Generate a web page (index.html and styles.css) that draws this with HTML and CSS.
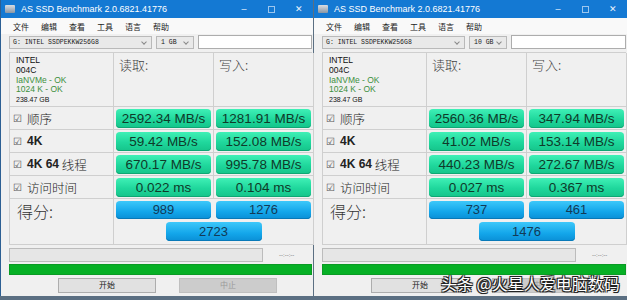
FILE: index.html
```html
<!DOCTYPE html>
<html lang="zh-CN">
<head>
  <meta charset="UTF-8" />
  <title>AS SSD Benchmark</title>
  <link rel="stylesheet" href="styles.css">
</head>
<body>
  <div class="desktop">
    <!-- left window: 1 GB run -->
    <div class="window">
      <div class="titlebar">
        <span class="app-icon"></span>
        <span class="title">AS SSD Benchmark 2.0.6821.41776</span>
        <span class="controls"><span>&#8211;</span><span class="max"></span><span>&#10005;</span></span>
      </div>
      <div class="menubar">
        <span>文件</span><span>编辑</span><span>查看</span><span>工具</span><span>语言</span><span>帮助</span>
      </div>
      <div class="drive-row">
        <div class="select drive">G: INTEL SSDPEKKW256G8<span class="caret"></span></div>
        <div class="select size">1 GB<span class="caret"></span></div>
        <div class="textbox"></div>
      </div>
      <div class="panel">
        <div class="cell info">
          <div>INTEL</div>
          <div>004C</div>
          <div class="ok">IaNVMe - OK</div>
          <div class="ok">1024 K - OK</div>
          <div class="small">238.47 GB</div>
        </div>
        <div class="cell head">读取:</div>
        <div class="cell head">写入:</div>

        <div class="cell label"><span class="check">&#9745;</span>顺序</div>
        <div class="cell"><div class="bar">2592.34 MB/s</div></div>
        <div class="cell"><div class="bar">1281.91 MB/s</div></div>

        <div class="cell label"><span class="check">&#9745;</span><b>4K</b></div>
        <div class="cell"><div class="bar">59.42 MB/s</div></div>
        <div class="cell"><div class="bar">152.08 MB/s</div></div>

        <div class="cell label"><span class="check">&#9745;</span><b>4K 64</b>&nbsp;线程</div>
        <div class="cell"><div class="bar">670.17 MB/s</div></div>
        <div class="cell"><div class="bar">995.78 MB/s</div></div>

        <div class="cell label"><span class="check">&#9745;</span>访问时间</div>
        <div class="cell"><div class="bar">0.022 ms</div></div>
        <div class="cell"><div class="bar">0.104 ms</div></div>

        <div class="cell score-label">得分:</div>
        <div class="cell scores">
          <div class="score">989</div>
          <div class="score">1276</div>
          <div class="score total">2723</div>
        </div>
      </div>
      <div class="progress-row">
        <div class="progress"></div>
        <span class="time">--:--:--</span>
      </div>
      <div class="green-bar"></div>
      <div class="buttons">
        <div class="btn">开始</div>
        <div class="btn disabled">中止</div>
      </div>
    </div>

    <!-- right window: 10 GB run -->
    <div class="window">
      <div class="titlebar">
        <span class="app-icon"></span>
        <span class="title">AS SSD Benchmark 2.0.6821.41776</span>
        <span class="controls"><span>&#8211;</span><span class="max"></span><span>&#10005;</span></span>
      </div>
      <div class="menubar">
        <span>文件</span><span>编辑</span><span>查看</span><span>工具</span><span>语言</span><span>帮助</span>
      </div>
      <div class="drive-row">
        <div class="select drive">G: INTEL SSDPEKKW256G8<span class="caret"></span></div>
        <div class="select size">10 GB<span class="caret"></span></div>
        <div class="textbox"></div>
      </div>
      <div class="panel">
        <div class="cell info">
          <div>INTEL</div>
          <div>004C</div>
          <div class="ok">IaNVMe - OK</div>
          <div class="ok">1024 K - OK</div>
          <div class="small">238.47 GB</div>
        </div>
        <div class="cell head">读取:</div>
        <div class="cell head">写入:</div>

        <div class="cell label"><span class="check">&#9745;</span>顺序</div>
        <div class="cell"><div class="bar">2560.36 MB/s</div></div>
        <div class="cell"><div class="bar">347.94 MB/s</div></div>

        <div class="cell label"><span class="check">&#9745;</span><b>4K</b></div>
        <div class="cell"><div class="bar">41.02 MB/s</div></div>
        <div class="cell"><div class="bar">153.14 MB/s</div></div>

        <div class="cell label"><span class="check">&#9745;</span><b>4K 64</b>&nbsp;线程</div>
        <div class="cell"><div class="bar">440.23 MB/s</div></div>
        <div class="cell"><div class="bar">272.67 MB/s</div></div>

        <div class="cell label"><span class="check">&#9745;</span>访问时间</div>
        <div class="cell"><div class="bar">0.027 ms</div></div>
        <div class="cell"><div class="bar">0.367 ms</div></div>

        <div class="cell score-label">得分:</div>
        <div class="cell scores">
          <div class="score">737</div>
          <div class="score">461</div>
          <div class="score total">1476</div>
        </div>
      </div>
      <div class="progress-row">
        <div class="progress"></div>
        <span class="time">--:--:--</span>
      </div>
      <div class="green-bar"></div>
      <div class="buttons">
        <div class="btn">开始</div>
        <div class="btn disabled">中止</div>
      </div>
    </div>

    <div class="watermark">头条 @火星人爱电脑数码</div>
  </div>
</body>
</html>
```

FILE: styles.css
```css
* {
  box-sizing: border-box;
}

body {
  margin: 0;
  padding: 0;
  width: 627px;
  height: 300px;
  overflow: hidden;
  background: #c9d3dc;
  font-family: "Liberation Sans", "Noto Sans CJK SC", sans-serif;
  color: #111;
}

.desktop {
  position: relative;
  display: flex;
  gap: 1px;
  width: 627px;
  height: 300px;
  background: #5b6f82;
}

.window {
  width: 313px;
  height: 296px;
  background: #f0f0f0;
  display: flex;
  flex-direction: column;
}

.window:first-child {
  border-left: 1px solid #2c5f93;
}

/* title bar */
.titlebar {
  height: 18px;
  background: #1479d3;
  color: #fff;
  display: flex;
  align-items: center;
  padding-left: 4px;
}

.app-icon {
  width: 10px;
  height: 8px;
  background: linear-gradient(#d8dde3, #8a96a3);
  border-radius: 1px;
  margin-right: 6px;
}

.title {
  font-size: 9px;
  flex: 1;
  white-space: nowrap;
}

.controls {
  display: flex;
  align-items: center;
  font-size: 9px;
  color: #e8f2fc;
}

.controls span {
  width: 28px;
  text-align: center;
}

.controls .max {
  width: 7px;
  height: 7px;
  border: 1px solid #9cc6ee;
  margin: 0 10px;
}

/* menu */
.menubar {
  height: 16px;
  background: #f9f9f9;
  display: flex;
  align-items: center;
  padding-left: 12px;
  gap: 12px;
  font-size: 8px;
  color: #222;
}

.drive-row {
  height: 16px;
  display: flex;
  align-items: center;
  padding: 0 0 0 8px;
  gap: 4px;
  background: #f0f0f0;
}

.select {
  position: relative;
  height: 13px;
  background: #e9e9e9;
  border: 1px solid #b9b9b9;
  font-family: "Liberation Mono", monospace;
  font-size: 6.5px;
  line-height: 11px;
  padding-left: 3px;
  color: #222;
}

.select.drive {
  width: 143px;
}

.select.size {
  width: 38px;
  font-size: 6.5px;
  padding-left: 4px;
}

.caret {
  position: absolute;
  right: 5px;
  top: 3px;
  width: 4px;
  height: 4px;
  border-right: 1px solid #888;
  border-bottom: 1px solid #888;
  transform: rotate(45deg);
}

.textbox {
  flex: 1;
  height: 14px;
  background: #fff;
  border: 1px solid #adadad;
  margin-right: 1px;
}

/* result grid */
.panel {
  margin: 2px 1px 0 8px;
  display: grid;
  grid-template-columns: 104px 100px 100px;
  grid-template-rows: 54px 23px 23px 23px 23px 46px;
  border-top: 1px solid #cfcfcf;
  border-left: 1px solid #cfcfcf;
}

.cell {
  border-right: 1px solid #cfcfcf;
  border-bottom: 1px solid #cfcfcf;
  padding: 2px;
}

.info {
  padding: 3px 0 0 6px;
  font-size: 8.5px;
  line-height: 9.8px;
}

.info .ok {
  color: #3d8f3d;
}

.info .small {
  font-size: 7px;
}

.head {
  font-family: "Noto Sans CJK SC", sans-serif;
  font-weight: 300;
  font-size: 13px;
  color: #444;
  padding: 2px 0 0 5px;
}

.label {
  display: flex;
  align-items: center;
  padding-left: 3px;
  font-family: "Noto Sans CJK SC", sans-serif;
  font-weight: 300;
  font-size: 12.5px;
  color: #222;
}

.label b {
  font-family: "Liberation Sans", sans-serif;
  font-weight: bold;
  font-size: 12px;
}

.check {
  font-family: "DejaVu Sans", sans-serif;
  font-size: 10px;
  color: #555;
  margin-right: 5px;
}

.bar {
  height: 19px;
  border-radius: 4px;
  background: linear-gradient(#3ff0b6, #1fd79c 55%, #15c48a);
  box-shadow: inset 0 -1px 0 #0fa774;
  color: #0f3a2a;
  font-size: 13.5px;
  line-height: 19px;
  text-align: center;
}

.score-label {
  font-family: "Noto Sans CJK SC", sans-serif;
  font-weight: 300;
  font-size: 16px;
  color: #333;
  padding: 0 0 0 7px;
}

.scores {
  grid-column: 2 / 4;
  display: grid;
  grid-template-columns: 1fr 1fr;
  grid-template-rows: 18px 19px;
  gap: 3px 5px;
  padding: 2px 2px 0 2px;
}

.score {
  border-radius: 4px;
  background: linear-gradient(#3dc8fa, #13a6ea 60%, #0a8fd6);
  box-shadow: inset 0 -1px 0 #0879b8;
  color: #123a57;
  font-size: 13px;
  line-height: 18px;
  text-align: center;
}

.score.total {
  grid-column: 1 / 3;
  justify-self: center;
  width: 96px;
  line-height: 19px;
}

/* bottom part */
.progress-row {
  display: flex;
  align-items: center;
  margin: 3px 0 0 8px;
  height: 14px;
}

.progress {
  width: 254px;
  height: 14px;
  background: #e6e6e6;
  border: 1px solid #bcbcbc;
}

.time {
  font-size: 6px;
  color: #666;
  margin-left: 16px;
}

.green-bar {
  margin: 2px 1px 0 8px;
  height: 11px;
  background: #06b025;
  border: 1px solid #0a9a24;
}

.buttons {
  display: flex;
  gap: 23px;
  margin: 3px 0 0 57px;
}

.btn {
  width: 98px;
  height: 15px;
  background: #e1e1e1;
  border: 1px solid #adadad;
  font-size: 8px;
  line-height: 13px;
  text-align: center;
  color: #222;
}

.btn.disabled {
  background: #cccccc;
  border-color: #bfbfbf;
  color: #9a9a9a;
}

.watermark {
  position: absolute;
  left: 441px;
  top: 271px;
  font-family: "Noto Sans CJK SC", sans-serif;
  font-size: 16px;
  color: #fff;
  white-space: nowrap;
  text-shadow: -1px -1px 0 #222, 1px -1px 0 #222, -1px 1px 0 #222, 1px 1px 0 #222, 0 0 2px #000;
}
```
